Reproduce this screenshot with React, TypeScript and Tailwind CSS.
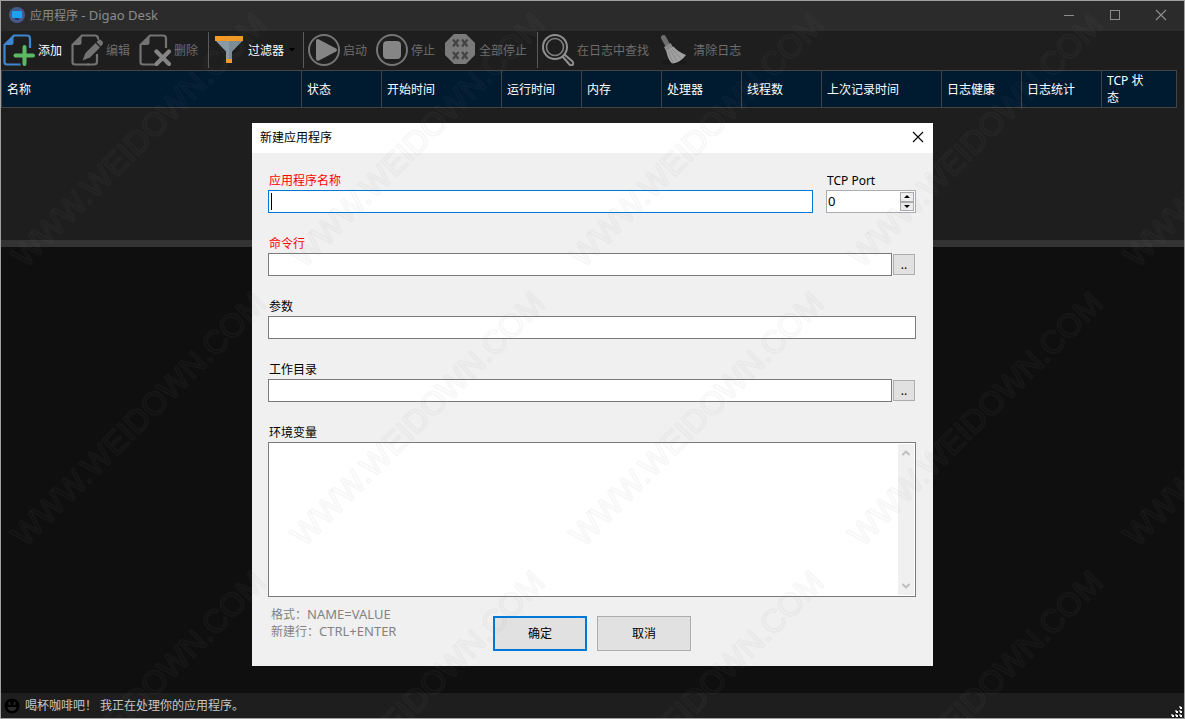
import { useState } from "react";
import type { ReactNode } from "react";
import { ChevronDown, ChevronUp } from "lucide-react";

const COLUMNS = [
  { label: "名称", width: "" },
  { label: "状态", width: "w-[80px]" },
  { label: "开始时间", width: "w-[120px]" },
  { label: "运行时间", width: "w-[80px]" },
  { label: "内存", width: "w-[80px]" },
  { label: "处理器", width: "w-[80px]" },
  { label: "线程数", width: "w-[80px]" },
  { label: "上次记录时间", width: "w-[120px]" },
  { label: "日志健康", width: "w-[80px]" },
  { label: "日志统计", width: "w-[80px]" },
  { label: "TCP 状态", width: "w-[75px]" },
];

const WATERMARK_X = [24, 303, 582, 861, 1136];
const WATERMARK_Y = [268, 547, 826];

function PageShape({ color }: { color: string }) {
  return (
    <>
      <path d="M27 14V4.500Q27 1.500 24 1.500H11L1.500 11V28Q1.500 30.500 4 30.500H18" fill="none" stroke={color} strokeWidth="2.200" />
      <path d="M10.500 1V8.500Q10.500 11 8 11H1Z" fill={color} />
    </>
  );
}

function AddIcon() {
  return (
    <svg width="32" height="32" viewBox="0 0 32 32" aria-hidden="true">
      <PageShape color="#3f86cf" />
      <path d="M21 11V31M11 21.500H31" stroke="#1e1e1e" strokeWidth="7" />
      <path d="M21.500 13V30M12.500 21.500H30" stroke="#5cb963" strokeWidth="4" strokeLinecap="round" />
    </svg>
  );
}

function EditIcon() {
  return (
    <svg width="32" height="32" viewBox="0 0 32 32" aria-hidden="true">
      <PageShape color="#737373" />
      <path d="M26 20V27.500Q26 30.500 23 30.500H16" fill="none" stroke="#737373" strokeWidth="2.200" />
      <path d="M10 28L13.500 18L26 5L33 11L19 25Z" fill="#1e1e1e" />
      <path d="M11.500 26.500L14.500 19L24.500 9L29 13.500L19 23.500Z" fill="#737373" />
      <path d="M25.500 8L27.500 6Q29 5 30.500 6.500L31.500 7.500Q32.500 9 31.500 10.500L29.800 12.500Z" fill="#737373" />
    </svg>
  );
}

function DeleteIcon() {
  return (
    <svg width="32" height="32" viewBox="0 0 32 32" aria-hidden="true">
      <PageShape color="#737373" />
      <path d="M17 17L31 31M31 17L17 31" stroke="#1e1e1e" strokeWidth="7" />
      <path d="M17.500 17.500L30 30M30 17.500L17.500 30" stroke="#858585" strokeWidth="4.200" strokeLinecap="round" />
    </svg>
  );
}

function FilterIcon() {
  return (
    <svg width="32" height="32" viewBox="0 0 32 32" aria-hidden="true">
      <path d="M3 7H29L19 17.500V26H13V17.500Z" fill="#8b9ba5" />
      <path d="M16 7H29L19 17.500V26H16Z" fill="#7b8c97" />
      <rect x="2" y="2" width="28" height="5" fill="#f59a23" />
      <rect x="13" y="25" width="6" height="4" fill="#f59a23" />
    </svg>
  );
}

function StartIcon() {
  return (
    <svg width="32" height="32" viewBox="0 0 32 32" aria-hidden="true">
      <circle cx="16" cy="16" r="15" fill="none" stroke="#757575" strokeWidth="2" />
      <path d="M8 6Q9 4.500 11 5.500L28 14.500Q30 16 28 17.500L11 26.500Q8 27.500 8 25Z" fill="#858585" />
    </svg>
  );
}

function StopIcon() {
  return (
    <svg width="32" height="32" viewBox="0 0 32 32" aria-hidden="true">
      <circle cx="16" cy="16" r="15" fill="none" stroke="#757575" strokeWidth="2" />
      <rect x="7" y="7" width="18" height="18" rx="4" fill="#858585" />
    </svg>
  );
}

function StopAllIcon() {
  return (
    <svg width="32" height="32" viewBox="0 0 32 32" aria-hidden="true">
      <path d="M10 0H22L31 9V21L22 30H10L1 21V9Z" fill="#7a7a7a" />
      <path
        d="M9 5.500L14.500 12.500M14.500 5.500L9 12.500M18 5.500L23.500 12.500M23.500 5.500L18 12.500M9 18L14.500 25M14.500 18L9 25M18 18L23.500 25M23.500 18L18 25"
        stroke="#444"
        strokeWidth="2.200"
      />
    </svg>
  );
}

function SearchIcon() {
  return (
    <svg width="32" height="32" viewBox="0 0 32 32" fill="none" aria-hidden="true">
      <circle cx="13" cy="13" r="12" stroke="#909090" strokeWidth="2" />
      <circle cx="13" cy="13" r="8.500" stroke="#808080" strokeWidth="1.600" />
      <path d="M22.500 20.500L30.500 27.500Q32 29.500 30.500 31Q29 32 27.500 30.500L20.500 22.500" stroke="#909090" strokeWidth="2" />
    </svg>
  );
}

function BroomIcon() {
  return (
    <svg width="32" height="32" viewBox="0 0 32 32" aria-hidden="true">
      <ellipse cx="16" cy="28" rx="13" ry="2.500" fill="#191919" />
      <path d="M5.500 3.500L9 10" stroke="#6e6e6e" strokeWidth="5" strokeLinecap="round" />
      <path d="M6 13L12.500 9L15 13L8 17Z" fill="#8a8a8a" />
      <path d="M8 16.500L15.500 12.500Q20 18 28 21Q23 28 15 29.500Q11 29 8 16.500Z" fill="#a0a0a0" />
      <path d="M10 17L15 28.500M12 16L19 27M14 15L23 24.500" stroke="#888" strokeWidth="1" />
    </svg>
  );
}

type ToolButtonProps = {
  icon: ReactNode;
  label: string;
  disabled?: boolean;
};

function ToolButton({ icon, label, disabled }: ToolButtonProps) {
  return (
    <button
      type="button"
      disabled={disabled}
      className="flex shrink-0 items-center gap-[3px] whitespace-nowrap text-white disabled:text-[#6d6d6d]"
    >
      {icon}
      {label}
    </button>
  );
}

function Separator() {
  return <div className="mr-1 ml-[10px] h-9 w-px shrink-0 bg-[#5a5a5a]" />;
}

function TitleBar() {
  return (
    <header className="flex h-[30px] shrink-0 items-center bg-[#2b2b2b] pr-[17px] pb-[2px] pl-[7px] text-[#8c8c8c]">
      <svg width="18" height="18" viewBox="0 0 18 18" className="mr-1" aria-hidden="true">
        <circle cx="9" cy="9" r="8" fill="#47598c" />
        <rect x="4" y="5" width="10" height="7" rx="1" fill="#1da1f2" />
        <rect x="7" y="12" width="4" height="2" fill="#2b3a63" />
      </svg>
      <h1 className="flex-1">
        应用程序 <span className="text-[13px]">- Digao Desk</span>
      </h1>
      <div className="flex items-center gap-[34px]">
        <button type="button" aria-label="最小化">
          <svg width="12" height="12" viewBox="0 0 12 12">
            <path d="M1 6.500H11" stroke="#8c8c8c" />
          </svg>
        </button>
        <button type="button" aria-label="最大化">
          <svg width="12" height="12" viewBox="0 0 12 12">
            <rect x="1.500" y="1.500" width="9" height="9" fill="none" stroke="#8c8c8c" />
          </svg>
        </button>
        <button type="button" aria-label="关闭">
          <svg width="12" height="12" viewBox="0 0 12 12">
            <path d="M1 1L11 11M11 1L1 11" stroke="#8c8c8c" strokeWidth="1.200" />
          </svg>
        </button>
      </div>
    </header>
  );
}

function Toolbar() {
  return (
    <div className="flex h-[39px] shrink-0 items-center pb-px pl-[2px]">
      <div className="flex gap-[9px]">
        <ToolButton icon={<AddIcon />} label="添加" />
        <ToolButton icon={<EditIcon />} label="编辑" disabled />
        <ToolButton icon={<DeleteIcon />} label="删除" disabled />
      </div>
      <Separator />
      <ToolButton icon={<FilterIcon />} label="过滤器" />
      <svg width="6" height="4" viewBox="0 0 6 4" className="ml-[5px] shrink-0" aria-hidden="true">
        <path d="M0 0H6L3 3.500Z" fill="#000" />
      </svg>
      <div className="mr-1 ml-2 h-9 w-px shrink-0 bg-[#5a5a5a]" />
      <div className="flex gap-[9px]">
        <ToolButton icon={<StartIcon />} label="启动" disabled />
        <ToolButton icon={<StopIcon />} label="停止" disabled />
        <ToolButton icon={<StopAllIcon />} label="全部停止" disabled />
      </div>
      <Separator />
      <div className="flex gap-[9px]">
        <ToolButton icon={<SearchIcon />} label="在日志中查找" disabled />
        <ToolButton icon={<BroomIcon />} label="清除日志" disabled />
      </div>
    </div>
  );
}

function AppTable() {
  return (
    <div className="h-[170px] shrink-0 pr-[7px]">
      <table className="w-full table-fixed border-collapse bg-[#001a30] text-left text-white">
        <thead>
          <tr className="h-[37px]">
            {COLUMNS.map((col) => (
              <th key={col.label} className={`border border-[#444] px-[5px] font-normal ${col.width}`}>
                {col.label === "TCP 状态" ? (
                  <>
                    TCP 状<br />态
                  </>
                ) : (
                  col.label
                )}
              </th>
            ))}
          </tr>
        </thead>
      </table>
    </div>
  );
}

function StatusBar() {
  return (
    <footer className="flex h-[25px] shrink-0 items-center bg-[#1e1e1e] pl-[3px] text-[#c8c8c8]">
      <svg width="16" height="16" viewBox="0 0 16 16" className="mr-[5px]" aria-hidden="true">
        <circle cx="8" cy="8" r="7.500" fill="#000" />
        <path d="M5.500 4V7M10.500 4V7" stroke="#2a2a2a" strokeWidth="1.800" />
        <path d="M3.500 9H12.500Q12 13 8 13Q4 13 3.500 9Z" fill="#2a2a2a" />
      </svg>
      <p className="flex-1">喝杯咖啡吧！ 我正在处理你的应用程序。</p>
      <svg width="12" height="12" viewBox="0 0 12 12" className="mr-px self-end" aria-hidden="true">
        <path d="M8 0h2v2h-2zM4 4h2v2h-2zM8 4h2v2h-2zM0 8h2v2h-2zM4 8h2v2h-2zM8 8h2v2h-2z" fill="#999" />
        <path d="M9 1h2v2h-2zM5 5h2v2h-2zM9 5h2v2h-2zM1 9h2v2h-2zM5 9h2v2h-2zM9 9h2v2h-2z" fill="#fff" />
      </svg>
    </footer>
  );
}

type FieldProps = {
  id: string;
  label: string;
  required?: boolean;
  browse?: boolean;
};

function Field({ id, label, required, browse }: FieldProps) {
  return (
    <div>
      <label htmlFor={id} className={`block h-[18px] pl-px ${required ? "text-[#ff0000]" : ""}`}>
        {label}
      </label>
      <div className="flex items-center gap-px">
        <input
          id={id}
          type="text"
          className="h-[23px] min-w-0 flex-1 border border-[#7a7a7a] bg-white px-1 outline-none"
        />
        {browse && (
          <button
            type="button"
            aria-label={`浏览${label}`}
            className="mr-px h-[21px] w-[22px] border border-[#adadad] bg-[#e1e1e1]"
          >
            ..
          </button>
        )}
      </div>
    </div>
  );
}

function NewAppDialog() {
  const [port, setPort] = useState(0);

  return (
    <div role="dialog" aria-labelledby="dialog-title" className="w-[681px] bg-[#f0f0f0] text-black">
      <div className="flex h-[30px] items-center justify-between bg-white pr-[9px] pb-[2px] pl-2">
        <h2 id="dialog-title">新建应用程序</h2>
        <button type="button" aria-label="关闭">
          <svg width="12" height="12" viewBox="0 0 12 12">
            <path d="M1 1L11 11M11 1L1 11" stroke="#000" strokeWidth="1.100" />
          </svg>
        </button>
      </div>

      <form className="flex flex-col gap-[22px] pt-[19px] pr-[17px] pb-[15px] pl-4" onSubmit={(e) => e.preventDefault()}>
        <div className="flex gap-[13px]">
          <div className="flex-1">
            <label htmlFor="app-name" className="block h-[18px] pl-px text-[#ff0000]">
              应用程序名称
            </label>
            <div className="relative">
              <input
                id="app-name"
                type="text"
                className="block h-[23px] w-full border border-[#0078d7] bg-white px-1 outline-none"
              />
              {/* Caret */}
              <span className="absolute top-[3px] left-[3px] h-[17px] w-px bg-black" />
            </div>
          </div>
          <div className="w-[90px]">
            <label htmlFor="tcp-port" className="block h-[18px] pl-px">
              TCP Port
            </label>
            <div className="flex h-[23px] border border-[#abadb3] bg-white p-px">
              <input
                id="tcp-port"
                type="text"
                inputMode="numeric"
                value={port}
                onChange={(e) => setPort(Number(e.target.value) || 0)}
                className="min-w-0 flex-1 text-[13px] outline-none"
              />
              <div className="flex w-[14px] flex-col">
                <button
                  type="button"
                  aria-label="增加"
                  onClick={() => setPort(port + 1)}
                  className="flex flex-1 items-center justify-center border border-[#acacac] bg-[#f0f0f0]"
                >
                  <svg width="6" height="3" viewBox="0 0 6 3">
                    <path d="M0 3H6L3 0Z" />
                  </svg>
                </button>
                <button
                  type="button"
                  aria-label="减少"
                  onClick={() => setPort(Math.max(0, port - 1))}
                  className="flex flex-1 items-center justify-center border border-[#acacac] bg-[#f0f0f0]"
                >
                  <svg width="6" height="3" viewBox="0 0 6 3">
                    <path d="M0 0H6L3 3Z" />
                  </svg>
                </button>
              </div>
            </div>
          </div>
        </div>

        <Field id="command" label="命令行" required browse />
        <Field id="params" label="参数" />
        <Field id="work-dir" label="工作目录" browse />

        <div>
          <label htmlFor="env" className="block h-[18px] pl-px">
            环境变量
          </label>
          <div className="flex h-[155px] border border-[#7a7a7a] bg-white p-px">
            <textarea id="env" className="min-w-0 flex-1 resize-none px-1 outline-none" />
            <div className="flex w-4 flex-col items-center justify-between bg-[#f0f0f0] py-[3px] text-[#bfbfbf]">
              <ChevronUp size={12} strokeWidth={4} />
              <ChevronDown size={12} strokeWidth={4} />
            </div>
          </div>
          <div className="mt-[9px] flex">
            <p className="w-[225px] pl-[3px] text-[#838383]">
              格式：<span className="text-[13px]">NAME=VALUE</span>
              <br />
              新建行：<span className="text-[13px]">CTRL+ENTER</span>
            </p>
            <div className="mt-[10px] flex gap-[10px]">
              <button type="submit" className="h-[35px] w-[94px] border-2 border-[#0078d7] bg-[#e1e1e1]">
                确定
              </button>
              <button type="button" className="h-[35px] w-[94px] border border-[#adadad] bg-[#e1e1e1]">
                取消
              </button>
            </div>
          </div>
        </div>
      </form>
    </div>
  );
}

function Watermark() {
  return (
    <svg className="pointer-events-none absolute inset-0 h-full w-full" aria-hidden="true">
      {WATERMARK_Y.map((y) =>
        WATERMARK_X.map((x) => (
          <text
            key={`${x}-${y}`}
            transform={`translate(${x} ${y}) rotate(-45)`}
            fontSize="32"
            fontFamily="Liberation Sans, sans-serif"
            fill="none"
            stroke="#888"
            strokeOpacity="0.07"
            strokeWidth="2"
            strokeLinejoin="round"
          >
            WWW.WEIDOWN.COM
          </text>
        ))
      )}
    </svg>
  );
}

export default function App() {
  return (
    <div className="relative flex h-screen w-full flex-col overflow-hidden border border-[#a0a0a0] bg-[#1e1e1e] font-['Noto_Sans','Noto_Sans_CJK_SC',sans-serif] text-[12px] leading-[17px]">
      <TitleBar />
      <Toolbar />
      <AppTable />
      <div className="h-[7px] shrink-0 bg-[#333]" />
      <main className="flex-1 bg-[#0f0f0f]" />
      <StatusBar />

      {/* Dialog */}
      <div className="absolute inset-0 flex items-start justify-center pt-[122px]">
        <NewAppDialog />
      </div>
      <Watermark />
    </div>
  );
}
